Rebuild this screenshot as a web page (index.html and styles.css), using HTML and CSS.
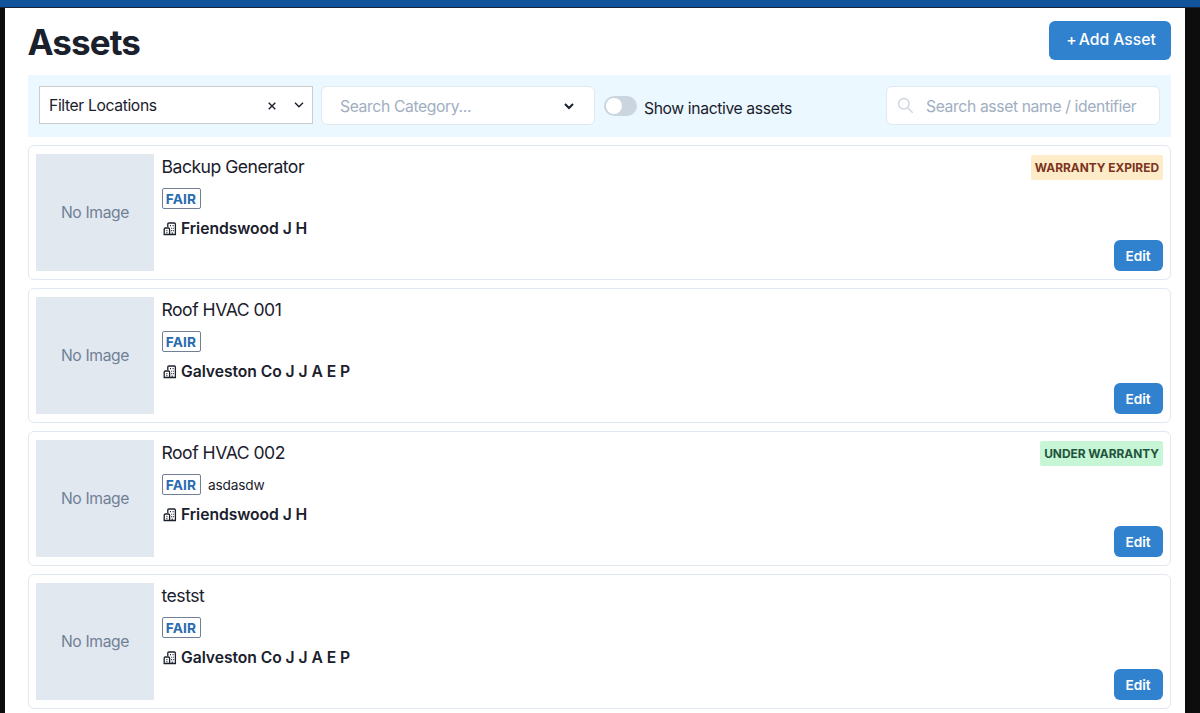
FILE: index.html
```html
<!DOCTYPE html>
<html lang="en">
<head>
  <meta charset="UTF-8" />
  <meta name="viewport" content="width=device-width, initial-scale=1.0" />
  <title>Assets</title>
  <link rel="stylesheet" href="styles.css">
</head>
<body>

  <svg class="sprite" aria-hidden="true">
    <symbol id="icon-building" viewBox="0 0 14 14">
      <path d="M4.8 5V2.2Q4.8 1 6 1H11.2Q12.4 1 12.4 2.2V12.5H1.2V7.2Q1.2 6 2.4 6H5.4Q6.6 6 6.6 7.2V12.5" fill="none" stroke="currentColor" stroke-width="1.3" />
      <path d="M7 3.6h1M9.6 3.6h1M8.2 6.2h.9M9.9 6.2h.9M8.2 8.6h.9M9.9 8.6h.9M3.4 8.6h1M3.4 10.6h1M9.2 10.6v2" fill="none" stroke="currentColor" stroke-width="1.1" />
    </symbol>
  </svg>

  <div class="topbar"></div>

  <div class="page">
    <div class="header">
      <h1>Assets</h1>
      <button class="btn btn-add"><span class="plus">+</span>Add Asset</button>
    </div>

    <div class="filters">
      <div class="select location-select">
        <span>Filter Locations</span>
        <svg class="clear" width="8" height="8" viewBox="0 0 8 8"><path d="M.7.7l6.6 6.6M7.3.7L.7 7.3" /></svg>
        <svg class="chevron" width="10" height="6" viewBox="0 0 10 6"><path d="M1 .8l4 4 4-4" /></svg>
      </div>
      <div class="select category-select">
        <span>Search Category...</span>
        <svg class="chevron" width="10" height="7" viewBox="0 0 10 7"><path d="M1 1l4 4 4-4" /></svg>
      </div>
      <div class="toggle">
        <span class="switch"></span>
        <span class="toggle-label">Show inactive assets</span>
      </div>
      <div class="search">
        <svg width="17" height="17" viewBox="0 0 17 17"><circle cx="6.8" cy="6.8" r="5.3" /><path d="M10.7 10.7l5 5" /></svg>
        <span>Search asset name / identifier</span>
      </div>
    </div>

    <div class="asset-list">
      <div class="asset">
        <div class="thumb">No Image</div>
        <div class="info">
          <div class="name">Backup Generator</div>
          <div class="meta"><span class="condition">FAIR</span></div>
          <div class="location"><svg><use href="#icon-building" /></svg><span>Friendswood J H</span></div>
        </div>
        <div class="actions">
          <span class="badge expired">WARRANTY EXPIRED</span>
          <button class="btn btn-edit">Edit</button>
        </div>
      </div>

      <div class="asset">
        <div class="thumb">No Image</div>
        <div class="info">
          <div class="name">Roof HVAC 001</div>
          <div class="meta"><span class="condition">FAIR</span></div>
          <div class="location"><svg><use href="#icon-building" /></svg><span>Galveston Co J J A E P</span></div>
        </div>
        <div class="actions">
          <button class="btn btn-edit">Edit</button>
        </div>
      </div>

      <div class="asset">
        <div class="thumb">No Image</div>
        <div class="info">
          <div class="name">Roof HVAC 002</div>
          <div class="meta"><span class="condition">FAIR</span><span class="note">asdasdw</span></div>
          <div class="location"><svg><use href="#icon-building" /></svg><span>Friendswood J H</span></div>
        </div>
        <div class="actions">
          <span class="badge active">UNDER WARRANTY</span>
          <button class="btn btn-edit">Edit</button>
        </div>
      </div>

      <div class="asset">
        <div class="thumb">No Image</div>
        <div class="info">
          <div class="name">testst</div>
          <div class="meta"><span class="condition">FAIR</span></div>
          <div class="location"><svg><use href="#icon-building" /></svg><span>Galveston Co J J A E P</span></div>
        </div>
        <div class="actions">
          <button class="btn btn-edit">Edit</button>
        </div>
      </div>
    </div>
  </div>

</body>
</html>
```
FILE: styles.css
```css
* {
  box-sizing: border-box;
}

body {
  margin: 0;
  height: 713px;
  overflow: hidden;
  background-color: #0d0d0d;
  color: #1a202c;
  font-family: Inter, sans-serif;
  font-size: 15.7px;
  white-space: nowrap;
}

.sprite {
  display: none;
}

.topbar {
  height: 8px;
  background-color: #11549c;
  border-bottom: 1px solid #17233b;
}

.page {
  height: 705px;
  margin: 0 15px 0 5px;
  padding: 12px 14px 0 22.5px;
  background-color: #fff;
}

.header {
  display: flex;
  justify-content: space-between;
  height: 55px;
}

h1 {
  margin: 0;
  font-size: 35px;
  line-height: 45px;
  font-weight: 700;
  letter-spacing: -0.9px;
}

.btn {
  border: none;
  border-radius: 6px;
  background-color: #3182ce;
  color: #fff;
  font-family: inherit;
  font-weight: 600;
  cursor: pointer;
}

.btn-add {
  width: 122px;
  height: 39px;
  margin-top: 1px;
  padding: 0 0 2px 2px;
  font-size: 15.7px;
  font-weight: 500;
}

.plus {
  margin-right: 2px;
}

.filters {
  display: flex;
  align-items: flex-start;
  height: 62px;
  padding: 11px 11px 0 11.5px;
  background-color: #ebf8ff;
  letter-spacing: -0.37px;
}

.select,
.search {
  display: flex;
  align-items: center;
  width: 274px;
  height: 39px;
  border: 1px solid #e2e8f0;
  border-radius: 6px;
  background-color: #fff;
  color: #a0aec0;
}

.select svg,
.search svg {
  fill: none;
  stroke: currentColor;
  stroke-width: 1.4;
}

.location-select {
  height: 38px;
  padding: 0 8px 0 9px;
  border-color: #ccc;
  border-radius: 0;
  color: #1a202c;
}

.clear {
  margin: 2px 0 0 auto;
}

.location-select .chevron {
  margin-left: 18px;
}

.category-select {
  margin-left: 8px;
  padding: 0 20px 0 18px;
}

.category-select span,
.search span {
  padding-top: 2px;
}

.category-select .chevron {
  margin: 1px 0 0 auto;
  color: #1a202c;
  stroke-width: 2;
}

.toggle {
  display: flex;
  margin-left: 8.5px;
}

.switch {
  width: 33px;
  height: 20px;
  margin-top: 10px;
  padding: 2px;
  border-radius: 10px;
  background-color: #cbd5e0;
}

.switch::before {
  content: "";
  display: block;
  width: 16px;
  height: 16px;
  border-radius: 50%;
  background-color: #fff;
}

.toggle-label {
  margin-left: 7.5px;
  line-height: 46px;
}

.search {
  margin-left: auto;
  padding-left: 10px;
}

.search svg {
  margin-right: 12px;
  color: #cbd5e0;
}

.asset-list {
  display: grid;
  gap: 8px;
  margin-top: 8px;
}

.asset {
  display: flex;
  height: 135px;
  padding: 8px 7px 8px 7.5px;
  border: 1px solid #e2e8f0;
  border-radius: 6px;
}

.thumb {
  width: 118px;
  height: 117px;
  background-color: #e2e8f0;
  color: #718096;
  letter-spacing: -0.37px;
  line-height: 118px;
  text-align: center;
}

.info {
  margin-left: 7.5px;
}

.name {
  height: 34px;
  font-size: 17.6px;
  letter-spacing: -0.5px;
  line-height: 26px;
}

.meta {
  display: flex;
  align-items: center;
  height: 21px;
}

.condition {
  width: 39px;
  height: 21px;
  border: 1px solid #718096;
  border-radius: 2px;
  color: #2b6cb0;
  font-size: 13.7px;
  font-weight: 700;
  letter-spacing: 0.2px;
  line-height: 20px;
  text-align: center;
}

.note {
  margin-left: 7.5px;
  font-size: 13.7px;
  letter-spacing: -0.2px;
}

.location {
  display: flex;
  align-items: center;
  margin-top: 8px;
  font-weight: 600;
  letter-spacing: -0.06px;
  line-height: 24px;
}

.location svg {
  width: 14px;
  height: 14px;
  margin: 0 4.5px 1px 1px;
}

.actions {
  display: flex;
  flex-direction: column;
  align-items: flex-end;
  margin-left: auto;
}

.badge {
  height: 25px;
  margin-top: 1px;
  padding: 0 4px;
  border-radius: 2px;
  font-size: 11.9px;
  font-weight: 700;
  line-height: 25px;
}

.expired {
  background-color: #feebc8;
  color: #7b341e;
}

.active {
  background-color: #c6f6d5;
  color: #22543d;
}

.btn-edit {
  width: 49px;
  height: 31px;
  margin-top: auto;
  padding: 0 1px 0 0;
  font-size: 13.7px;
}
```
